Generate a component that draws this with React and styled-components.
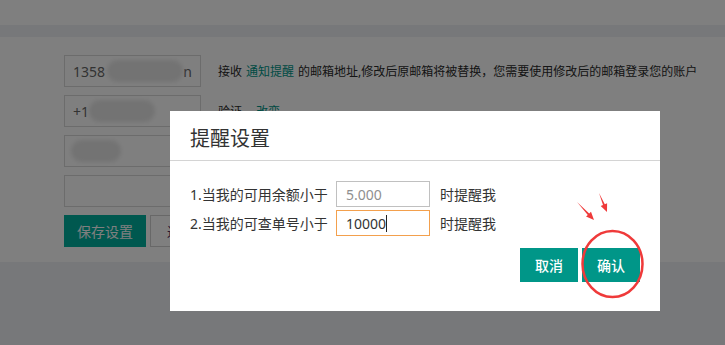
import React from "react";
import styled, { createGlobalStyle } from "styled-components";

const GlobalStyle = createGlobalStyle`
  html, body {
    margin: 0;
    padding: 0;
    background: #eff1f4;
    font-family: "Noto Sans", "Noto Sans CJK SC", sans-serif;
  }
  * { box-sizing: border-box; }
`;

const Page = styled.div`
  min-height: 345px;
  background: #eff1f4;
`;

const TopBar = styled.header`
  height: 25px;
  background: #ffffff;
`;

const SubBar = styled.div`
  height: 12px;
  background: #eff1f4;
`;

const Panel = styled.section`
  background: #ffffff;
  padding: 18px 0 15px 64px;
  display: flex;
  flex-direction: column;
  gap: 8px;
`;

const FormRow = styled.div`
  display: flex;
  align-items: center;
  gap: 17px;
`;

const PageInput = styled.div`
  width: 137px;
  height: 32px;
  border: 1px solid #d9d9d9;
  background: #fff;
  display: flex;
  align-items: center;
  padding: 0 8px;
  font-size: 14px;
  color: #666;
  overflow: hidden;
  white-space: nowrap;
`;

const Blur = styled.span`
  display: inline-block;
  width: ${(p) => p.$w}px;
  height: 22px;
  margin-left: ${(p) => p.$ml || 0}px;
  background: #e6e6e6;
  border-radius: 11px;
  filter: blur(2px);
`;

const Hint = styled.p`
  margin: 0;
  font-size: 12px;
  color: #2a2a2a;
`;

const Link = styled.span`
  color: #009688;
  margin: 0 ${(p) => p.$mx || 4}px;
`;

const ButtonRow = styled.div`
  display: flex;
  gap: 4px;
`;

const PageButton = styled.button`
  width: 82px;
  height: 32px;
  font-family: inherit;
  font-size: 14px;
  text-align: ${(p) => (p.$primary ? "center" : "left")};
  border: 1px solid ${(p) => (p.$primary ? "#00b09f" : "#d0d0d0")};
  background: ${(p) => (p.$primary ? "#00b09f" : "#ffffff")};
  color: ${(p) => (p.$primary ? "#ffffff" : "#553366")};
  padding: 0 0 0 ${(p) => (p.$primary ? 0 : 16)}px;
`;

const Overlay = styled.div`
  position: fixed;
  inset: 0;
  background: rgba(0, 0, 0, 0.5);
`;

const Dialog = styled.div`
  position: fixed;
  left: 170px;
  top: 111px;
  width: 490px;
  height: 200px;
  background: #ffffff;
  display: flex;
  flex-direction: column;
`;

const DialogHeader = styled.div`
  height: 50px;
  padding: 3px 20px 0;
  display: flex;
  align-items: center;
  border-bottom: 1px solid #d4d4d4;
  font-size: 20px;
  color: #333;
`;

const DialogBody = styled.div`
  padding: 20px 20px 0;
  display: grid;
  grid-template-columns: 146px 94px auto;
  row-gap: 3px;
  align-items: center;
  font-size: 14px;
  color: #333;
`;

const Label = styled.span`
  white-space: nowrap;
`;

const Field = styled.div`
  height: 26px;
  border: 1px solid ${(p) => (p.$focused ? "#f3a04d" : "#c0c0c0")};
  display: flex;
  align-items: center;
  padding: 0 9px;
  font-size: 14px;
  color: ${(p) => (p.$muted ? "#8f8f8f" : "#333")};
`;

const Caret = styled.span`
  display: inline-block;
  width: 1px;
  height: 17px;
  background: #222;
`;

const Suffix = styled.span`
  margin-left: 10px;
  white-space: nowrap;
`;

const DialogFooter = styled.div`
  margin-top: 12px;
  padding-right: 20px;
  display: flex;
  justify-content: flex-end;
  gap: 4px;
`;

const DialogButton = styled.button`
  width: 58px;
  height: 34px;
  border: none;
  background: #009688;
  color: #fff;
  font-family: inherit;
  font-size: 14px;
  font-weight: 500;
  padding: 0;
`;

const Annotation = styled.svg`
  position: absolute;
  left: 0;
  top: 0;
  pointer-events: none;
  overflow: visible;
`;

export default function App() {
  return (
    <>
      <GlobalStyle />
      <Page>
        <TopBar />
        <SubBar />
        <Panel>
          <FormRow>
            <PageInput>
              1358<Blur $w={80} $ml={2} />n
            </PageInput>
            <Hint>
              接收<Link>通知提醒</Link>的邮箱地址,修改后原邮箱将被替换，您需要使用修改后的邮箱登录您的账户
            </Hint>
          </FormRow>
          <FormRow>
            <PageInput>
              +1<Blur $w={66} $ml={0} />
            </PageInput>
            <Hint>
              验证<Link $mx={14}>改变</Link>
            </Hint>
          </FormRow>
          <FormRow>
            <PageInput>
              <Blur $w={50} $ml={-2} />
            </PageInput>
          </FormRow>
          <FormRow>
            <PageInput />
          </FormRow>
          <ButtonRow>
            <PageButton $primary>保存设置</PageButton>
            <PageButton>返回</PageButton>
          </ButtonRow>
        </Panel>
      </Page>
      <Overlay />
      <Dialog>
        <DialogHeader>提醒设置</DialogHeader>
        <DialogBody>
          <Label>1.当我的可用余额小于</Label>
          <Field $muted>5.000</Field>
          <Suffix>时提醒我</Suffix>
          <Label>2.当我的可查单号小于</Label>
          <Field $focused>
            10000
            <Caret />
          </Field>
          <Suffix>时提醒我</Suffix>
        </DialogBody>
        <DialogFooter>
          <DialogButton>取消</DialogButton>
          <DialogButton>确认</DialogButton>
        </DialogFooter>
        <Annotation width="490" height="200" viewBox="0 0 490 200">
          <ellipse cx="442.5" cy="153" rx="30" ry="33" fill="none" stroke="#ef3a3a" strokeWidth="2.5" />
          <polygon
            points="407,91 417.8,103.9 416,105.6 424,109 421,100.8 419.2,102.5"
            fill="#ef3a3a"
          />
          <polygon
            points="429,82 433,94 430.7,95 437,101 437.1,92.2 434.8,93.2"
            fill="#ef3a3a"
          />
        </Annotation>
      </Dialog>
    </>
  );
}
